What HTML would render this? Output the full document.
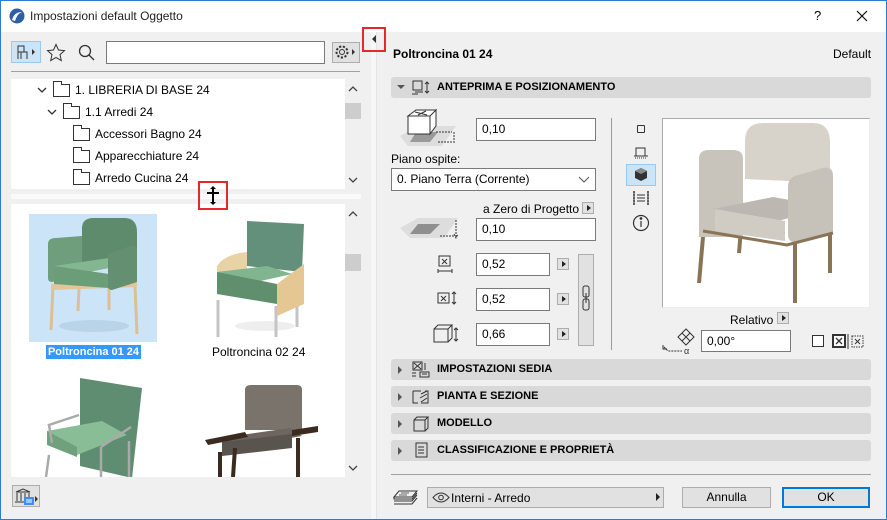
<!DOCTYPE html>
<html><head><meta charset="utf-8"><style>
*{box-sizing:border-box;margin:0;padding:0}
body{width:887px;height:520px;overflow:hidden;background:#f0f0f0;font-family:"Liberation Sans",sans-serif;font-size:12px;color:#000;position:relative}
.a{position:absolute}
.win{left:0;top:0;width:887px;height:520px;border:1px solid #2b7bd6}
.inp{position:absolute;background:#fff;border:1px solid #7a7a7a;padding-left:5px;line-height:20px;font-size:12px}
.hdr{position:absolute;left:391px;width:480px;height:21px;background:#d9d9d9;border-radius:3px;font-weight:bold;font-size:11px;line-height:21px}
.hdr .t{position:absolute;left:46px}
.hdr .tri{position:absolute;left:7px;top:7px;width:0;height:0;border-left:4px solid #555;border-top:4px solid transparent;border-bottom:4px solid transparent}
.sb{position:absolute;width:12px;height:12px;background:#e1e1e1;border:1px solid #adadad}
.sb:after{content:"";position:absolute;left:4px;top:2px;border-left:4px solid #222;border-top:3px solid transparent;border-bottom:3px solid transparent}
.fold{position:absolute;width:17px;height:13px;border:1px solid #333;background:#fff}
.fold:before{content:"";position:absolute;left:-1px;top:-4px;width:7px;height:3px;border:1px solid #333;border-bottom:none;background:#fff}
.tl{position:absolute;font-size:12px}
.btn{position:absolute;background:#e1e1e1;border:1px solid #adadad;text-align:center;line-height:19px}
</style></head><body>
<div class="a win"></div>
<div class="a" style="left:1px;top:1px;width:885px;height:31px;background:#fff"></div>
<svg class="a" style="left:9px;top:8px" width="16" height="16"><circle cx="8" cy="8" r="7.5" fill="#2d5ea8"/><path d="M3 12 Q5 4 13 4 Q8 6 6 13Z" fill="#fff"/></svg>
<div class="a" style="left:30px;top:9px;font-size:12px;color:#222">Impostazioni default Oggetto</div>
<div class="a" style="left:814px;top:8px;font-size:13px">?</div>
<svg class="a" style="left:856px;top:10px" width="12" height="12"><path d="M1 1L11 11M11 1L1 11" stroke="#000" stroke-width="1.1"/></svg>

<div class="a" style="left:11px;top:41px;width:30px;height:22px;background:#cce4f7;border:1px solid #99c9ef"></div>
<svg class="a" style="left:15px;top:44px" width="24" height="16" fill="none" stroke="#333"><path d="M3 2h6v6h-6zM3 8v7M9 8l3 0v7M6 8v7"/><path d="M17 5l3 3-3 3z" fill="#333" stroke="none"/></svg>
<svg class="a" style="left:46px;top:43px" width="20" height="19"><path d="M10 1.5l2.5 5.5 6 .6-4.5 4 1.3 6-5.3-3.1-5.3 3.1 1.3-6-4.5-4 6-.6z" fill="none" stroke="#333"/></svg>
<svg class="a" style="left:78px;top:44px" width="18" height="18" fill="none" stroke="#333" stroke-width="1.3"><circle cx="7" cy="7" r="5.5"/><path d="M11 11l5 5"/></svg>
<div class="a" style="left:106px;top:41px;width:219px;height:23px;background:#fff;border:1px solid #7a7a7a"></div>
<div class="a" style="left:332px;top:42px;width:28px;height:21px;background:#e1e1e1;border:1px solid #adadad"></div>
<svg class="a" style="left:334px;top:44px" width="25" height="17"><circle cx="8" cy="8" r="5.5" fill="none" stroke="#333" stroke-width="2" stroke-dasharray="2.2 1.6"/><circle cx="8" cy="8" r="2.5" fill="none" stroke="#333"/><path d="M18 5l3 3-3 3z" fill="#333"/></svg>
<div class="a" style="left:11px;top:71px;width:349px;height:1px;background:#a0a0a0"></div>

<div class="a" style="left:11px;top:79px;width:334px;height:110px;background:#fff"></div>
<div class="a" style="left:345px;top:79px;width:16px;height:110px;background:#f0f0f0"></div>
<div class="a" style="left:345px;top:103px;width:16px;height:16px;background:#cdcdcd"></div>
<svg class="a" style="left:347px;top:84px" width="12" height="10"><path d="M2 7l4-4 4 4" fill="none" stroke="#444" stroke-width="1.3"/></svg>
<svg class="a" style="left:347px;top:175px" width="12" height="10"><path d="M2 3l4 4 4-4" fill="none" stroke="#444" stroke-width="1.3"/></svg>
<svg class="a" style="left:37px;top:86px" width="10" height="8"><path d="M1 2l4 4 4-4" fill="none" stroke="#333" stroke-width="1.3"/></svg>
<div class="fold" style="left:53px;top:84px"></div><div class="tl" style="left:75px;top:83px">1. LIBRERIA DI BASE 24</div>
<svg class="a" style="left:47px;top:108px" width="10" height="8"><path d="M1 2l4 4 4-4" fill="none" stroke="#333" stroke-width="1.3"/></svg>
<div class="fold" style="left:63px;top:106px"></div><div class="tl" style="left:85px;top:105px">1.1 Arredi 24</div>
<div class="fold" style="left:73px;top:128px"></div><div class="tl" style="left:95px;top:127px">Accessori Bagno 24</div>
<div class="fold" style="left:73px;top:150px"></div><div class="tl" style="left:95px;top:149px">Apparecchiature 24</div>
<div class="fold" style="left:73px;top:172px"></div><div class="tl" style="left:95px;top:171px">Arredo Cucina 24</div>
<div class="a" style="left:11px;top:194px;width:350px;height:5px;background:#fafafa"></div>

<div class="a" style="left:11px;top:204px;width:334px;height:273px;background:#fff"></div>
<div class="a" style="left:345px;top:204px;width:16px;height:273px;background:#f0f0f0"></div>
<div class="a" style="left:345px;top:254px;width:16px;height:17px;background:#cdcdcd"></div>
<svg class="a" style="left:347px;top:209px" width="12" height="10"><path d="M2 7l4-4 4 4" fill="none" stroke="#444" stroke-width="1.3"/></svg>
<svg class="a" style="left:347px;top:463px" width="12" height="10"><path d="M2 3l4 4 4-4" fill="none" stroke="#444" stroke-width="1.3"/></svg>

<div class="a" style="left:29px;top:214px;width:128px;height:128px;background:#cce4f7"></div>
<svg class="a" style="left:29px;top:214px" width="128" height="128">
<ellipse cx="65" cy="112" rx="35" ry="6" fill="#b9d3e8"/>
<path d="M24 72l-2 44M106 72l2 48M50 75l-1 22M80 72v24" stroke="#dcbf94" stroke-width="3"/>
<path d="M22 70l86-2v5l-86 3z" fill="#e2c59a"/>
<path d="M53 14q0-10 12-10h30q13 0 13 14v30h-55z" fill="#5e8b6c"/>
<path d="M19 30q0-6 8-6l26-2v40l-30 6q-4 0-4-4z" fill="#6e9e7c"/>
<path d="M25 52l55-8 20 6-50 10z" fill="#82b791"/>
<path d="M25 52v18l55 4v-14z" fill="#6c9d79"/>
<path d="M79 40l25-9q4 0 4 5v32l-25 8q-4 0-4-4z" fill="#648f71"/>
</svg>
<div class="a" style="left:46px;top:345px;width:95px;height:14px;background:#3399ff;color:#fff;font-size:11px;line-height:14px;text-align:center;font-weight:bold;white-space:nowrap">Poltroncina 01 24</div>

<svg class="a" style="left:190px;top:214px" width="128" height="128">
<ellipse cx="75" cy="112" rx="30" ry="5" fill="#eee"/>
<path d="M28 86v37M86 92v31M107 86v27" stroke="#c4c4c4" stroke-width="3"/>
<path d="M57 7l57 3-2 48-55-6z" fill="#62907a"/>
<path d="M27 52q8-12 30-14v46l-30-6z" fill="#e9d2a5"/>
<path d="M27 58l50-6 25 8-45 10z" fill="#80b590"/>
<path d="M27 58v22l60 10v-20z" fill="#5f8f6d"/>
<path d="M87 70l27-20v40l-27 12z" fill="#e5c794"/>
</svg>
<div class="a" style="left:212px;top:345px;font-size:12px">Poltroncina 02 24</div>

<svg class="a" style="left:29px;top:375px" width="128" height="102">
<path d="M51 3l62 10-10 90-52-12z" fill="#5e8d71"/>
<path d="M18 56l55-10 25 14-50 20z" fill="#88bd96"/>
<path d="M18 56v14l30 12v-10z" fill="#70a07c"/>
<path d="M20 80l-3 22M23 68l-3-18 30-10M72 72l0 30M100 66l0 36M72 72l30-20" stroke="#aaa" stroke-width="2.5" fill="none"/>
</svg>
<svg class="a" style="left:190px;top:380px" width="128" height="97">
<path d="M55 10q0-5 6-5h46q5 0 5 5v40h-57z" fill="#7a736c"/>
<path d="M30 58l70-10 12 8-70 12z" fill="#6d6660"/>
<path d="M32 62v14l70-8v-14z" fill="#5a544f"/>
<path d="M15 60l40-8 3 5-40 8zM102 50l26-4v6l-26 4z" fill="#3b2a20"/>
<path d="M30 72v25M108 58v39M45 68l-2 29" stroke="#3b2a20" stroke-width="4"/>
</svg>

<div class="a" style="left:12px;top:485px;width:28px;height:22px;background:#e1e1e1;border:1px solid #adadad"></div>
<svg class="a" style="left:14px;top:487px" width="26" height="20"><path d="M2 5l7-3 7 3zM3 6v8M7 6v8M11 6v8M15 6v8M1 15h16" stroke="#333" fill="none"/><rect x="10" y="10" width="10" height="8" fill="#3c8ff0"/><path d="M12 13h6M12 15h6" stroke="#fff"/><path d="M21 9l3 3-3 3z" fill="#333"/></svg>
<div class="a" style="left:371px;top:32px;width:6px;height:487px;background:#f7f7f7"></div>
<div class="a" style="left:376px;top:32px;width:1px;height:487px;background:#e3e3e3"></div>
<div class="a" style="left:362px;top:27px;width:24px;height:25px;border:2px solid #e8262c"></div>
<div class="a" style="left:372px;top:35px;border-right:4px solid #333;border-top:4px solid transparent;border-bottom:4px solid transparent"></div>
<div class="a" style="left:198px;top:181px;width:30px;height:29px;border:2px solid #e8262c"></div>
<svg class="a" style="left:204px;top:186px" width="18" height="19"><path d="M9 1v17M3 7h12" stroke="#000" stroke-width="2"/><path d="M6 3l3-3 3 3zM6 16l3 3 3-3z" fill="#000"/></svg>

<div class="a" style="left:393px;top:47px;font-weight:bold;font-size:12px">Poltroncina 01 24</div>
<div class="a" style="left:833px;top:47px;font-size:12px">Default</div>
<div class="hdr" style="top:77px"><div style="position:absolute;left:6px;top:8px;border-top:4px solid #555;border-left:4px solid transparent;border-right:4px solid transparent"></div>
<svg style="position:absolute;left:20px;top:3px" width="22" height="15" fill="none" stroke="#333"><rect x="2" y="1" width="9" height="9"/><path d="M4 12h8M1 14h6M16 2v11M14 4l2-2 2 2M14 11l2 2 2-2"/></svg><span class="t">ANTEPRIMA E POSIZIONAMENTO</span></div>
<svg class="a" style="left:398px;top:108px" width="65" height="40"><path d="M2 28l18-10h38l-14 20H10z" fill="#ddd"/><path d="M18 24h22l-8 10H12z" fill="#9a9a9a"/><path d="M10 8l8-6h20l-6 6zM10 8h22v18H10zM32 8l6-6v16l-6 8z" fill="#fff" stroke="#333"/><path d="M17 4l12 3M28 3l-8 4" stroke="#333"/><path d="M38 24h16M40 34h14M56 24v12" stroke="#333" stroke-dasharray="2 1"/></svg>
<div class="inp" style="left:476px;top:118px;width:120px;height:23px">0,10</div>
<div class="a" style="left:391px;top:152px">Piano ospite:</div>
<div class="inp" style="left:391px;top:168px;width:205px;height:23px">0. Piano Terra (Corrente)</div>
<svg class="a" style="left:578px;top:176px" width="12" height="8"><path d="M1 1l5 5 5-5" fill="none" stroke="#555"/></svg>
<div class="a" style="left:483px;top:202px">a Zero di Progetto</div>
<div class="sb" style="left:582px;top:202px"></div>
<svg class="a" style="left:398px;top:218px" width="65" height="28"><path d="M2 10l18-10h40l-14 20H12z" fill="#ddd"/><path d="M20 6h22l-10 10H12z" fill="#8f8f8f"/><path d="M42 18h14M58 2v18M56 16l2 4 2-4" stroke="#333" fill="none" stroke-dasharray="2 1"/></svg>
<div class="inp" style="left:476px;top:218px;width:120px;height:23px">0,10</div>
<svg class="a" style="left:436px;top:255px" width="18" height="20" fill="none" stroke="#333"><rect x="3" y="1" width="11" height="10"/><path d="M6 4l5 5M11 4l-5 5M2 16h14M2 14v4M16 14v4"/></svg>
<svg class="a" style="left:437px;top:290px" width="22" height="16" fill="none" stroke="#333"><rect x="1" y="3" width="11" height="10"/><path d="M4 6l5 5M9 6l-5 5M17 2v12M15 4l2-2 2 2M15 12l2 2 2-2"/></svg>
<svg class="a" style="left:432px;top:324px" width="28" height="20" fill="none" stroke="#333"><path d="M2 5h14v13H2zM2 5l4-4h14l-4 4M20 1v13l-4 4"/><path d="M24 4v13M22 6l2-2 2 2M22 15l2 2 2-2"/></svg>
<div class="inp" style="left:476px;top:253px;width:74px;height:23px">0,52</div>
<div class="inp" style="left:476px;top:288px;width:74px;height:23px">0,52</div>
<div class="inp" style="left:476px;top:323px;width:74px;height:23px">0,66</div>
<div class="sb" style="left:557px;top:258px"></div><div class="sb" style="left:557px;top:293px"></div><div class="sb" style="left:557px;top:328px"></div>
<div class="a" style="left:578px;top:254px;width:16px;height:92px;background:#e1e1e1;border:1px solid #adadad"></div>
<svg class="a" style="left:581px;top:285px" width="10" height="26" fill="none" stroke="#333"><rect x="2" y="1" width="6" height="11" rx="2"/><rect x="2" y="14" width="6" height="11" rx="2"/><path d="M5 8v10"/></svg>
<div class="a" style="left:611px;top:118px;width:1px;height:232px;background:#999"></div>
<div class="a" style="left:637px;top:125px;width:8px;height:8px;border:1px solid #333;border-radius:1px"></div>
<svg class="a" style="left:633px;top:146px" width="16" height="14" fill="none" stroke="#333"><path d="M3 10V2h9v8M1 10h14"/><path d="M2 12h12" stroke-dasharray="1 1"/></svg>
<div class="a" style="left:626px;top:164px;width:30px;height:22px;background:#cce4f7;border:1px solid #99c9ef"></div>
<svg class="a" style="left:634px;top:167px" width="14" height="15"><path d="M7 1l6 3v7l-6 3-6-3V4z" fill="#333"/><path d="M1 4l6 3 6-3-6-3z" fill="#888"/></svg>
<svg class="a" style="left:632px;top:190px" width="18" height="16" fill="none" stroke="#333"><path d="M2 1v14M16 1v14M1 2h2M1 5h2M1 8h2M1 11h2M1 14h2M15 2h2M15 5h2M15 8h2M15 11h2M15 14h2M5 5h8M5 8h8M5 11h8"/></svg>
<svg class="a" style="left:632px;top:214px" width="18" height="18" fill="none" stroke="#333" stroke-width="1.2"><circle cx="9" cy="9" r="7.5"/><path d="M9 7v6"/><circle cx="9" cy="4.5" r=".8" fill="#333"/></svg>
<div class="a" style="left:662px;top:118px;width:208px;height:190px;background:#fff;border:1px solid #aaa;border-bottom-color:#eee;border-right-color:#eee"></div>
<svg class="a" style="left:663px;top:119px" width="206" height="188">
<path d="M40 118l-4 46M132 120v64M167 110v44M78 110l-2 24" stroke="#8a7455" stroke-width="4"/>
<path d="M82 60V22q0-18 18-18h50q17 0 17 20v40z" fill="#d8d3ca"/>
<path d="M36 40q0-9 10-9h24q10 0 10 9v78H36z" fill="#c8c4bc"/>
<path d="M50 90l60-12 55 10-50 14z" fill="#bcb8b1"/>
<path d="M52 90v22l70 10v-20z" fill="#d0ccc4"/>
<path d="M125 68q0-10 10-12l25-7q10-2 10 8v56l-35 10q-10 2-10-8z" fill="#c6c2ba"/>
<path d="M40 112l84 14 46-12" stroke="#8a7455" stroke-width="3" fill="none"/>
</svg>
<div class="a" style="left:730px;top:313px">Relativo</div>
<div class="sb" style="left:777px;top:312px"></div>
<svg class="a" style="left:662px;top:327px" width="34" height="28" fill="none" stroke="#333"><path d="M16 10l8-8 8 8-8 8z"/><path d="M20 6l8 8M28 6l-8 8"/><path d="M2 20l4 4h14" stroke-dasharray="2 1"/><path d="M1 18v4h4"/><text x="22" y="27" font-size="9" fill="#333" stroke="none" font-family="Liberation Sans">α</text></svg>
<div class="inp" style="left:701px;top:330px;width:90px;height:22px">0,00°</div>
<div class="a" style="left:812px;top:335px;width:12px;height:12px;border:1px solid #333;background:#fff"></div>
<svg class="a" style="left:832px;top:334px" width="34" height="15"><rect x="1" y="1" width="12" height="12" fill="#fff" stroke="#333" stroke-width="2"/><path d="M4 4l6 6M10 4l-6 6" stroke="#333" stroke-width="1.3"/><path d="M16 0v15" stroke="#333"/><rect x="20" y="2" width="11" height="11" fill="none" stroke="#333" stroke-dasharray="1.5 1"/><path d="M23 5l5 5M28 5l-5 5" stroke="#333"/></svg>

<div class="hdr" style="top:359px"><div class="tri"></div><svg style="position:absolute;left:20px;top:2px" width="20" height="17" fill="none" stroke="#333"><rect x="2" y="1" width="9" height="8"/><path d="M3 2l7 6M10 2l-7 6M14 2v7M1 12h4M1 15h4M9 11h9v5H9zM11 13h5"/></svg><span class="t">IMPOSTAZIONI SEDIA</span></div>
<div class="hdr" style="top:386px"><div class="tri"></div><svg style="position:absolute;left:21px;top:3px" width="18" height="15" fill="none" stroke="#333"><path d="M1 2h8M1 2v12h5M9 14h7V2h-3M9 5l6-3M8 9l7-4M9 13l6-4"/></svg><span class="t">PIANTA E SEZIONE</span></div>
<div class="hdr" style="top:413px"><div class="tri"></div><svg style="position:absolute;left:21px;top:2px" width="18" height="17" fill="none" stroke="#333"><path d="M2 5h11v11H2zM2 5l3-3h11l-3 3M16 2v11l-3 3"/></svg><span class="t">MODELLO</span></div>
<div class="hdr" style="top:440px"><div class="tri"></div><svg style="position:absolute;left:24px;top:2px" width="14" height="17" fill="none" stroke="#333"><rect x="1" y="1" width="11" height="14"/><path d="M3 5h6M3 8h6M3 11h6"/></svg><span class="t">CLASSIFICAZIONE E PROPRIETÀ</span></div>
<div class="a" style="left:391px;top:474px;width:480px;height:1px;background:#a0a0a0"></div>
<svg class="a" style="left:393px;top:489px" width="26" height="18" fill="none" stroke="#333"><path d="M6 2h18l-5 6H1zM1 8v2h18l5-6M1 12h18l5-6M1 15h18l5-6"/><path d="M8 4h8M6 6h8" stroke-width=".8"/></svg>
<div class="a" style="left:427px;top:487px;width:237px;height:21px;background:#e1e1e1;border:1px solid #adadad"></div>
<svg class="a" style="left:432px;top:492px" width="18" height="11" fill="none" stroke="#333"><path d="M1 5.5q8-9 16 0q-8 9-16 0z"/><circle cx="9" cy="5.5" r="2.3"/></svg>
<div class="a" style="left:451px;top:491px">Interni - Arredo</div>
<div class="a" style="left:656px;top:493px;border-left:4px solid #222;border-top:4px solid transparent;border-bottom:4px solid transparent"></div>
<div class="btn" style="left:682px;top:487px;width:89px;height:21px">Annulla</div>
<div class="btn" style="left:782px;top:487px;width:88px;height:21px;border:2px solid #0078d7;line-height:17px">OK</div>
</body></html>
